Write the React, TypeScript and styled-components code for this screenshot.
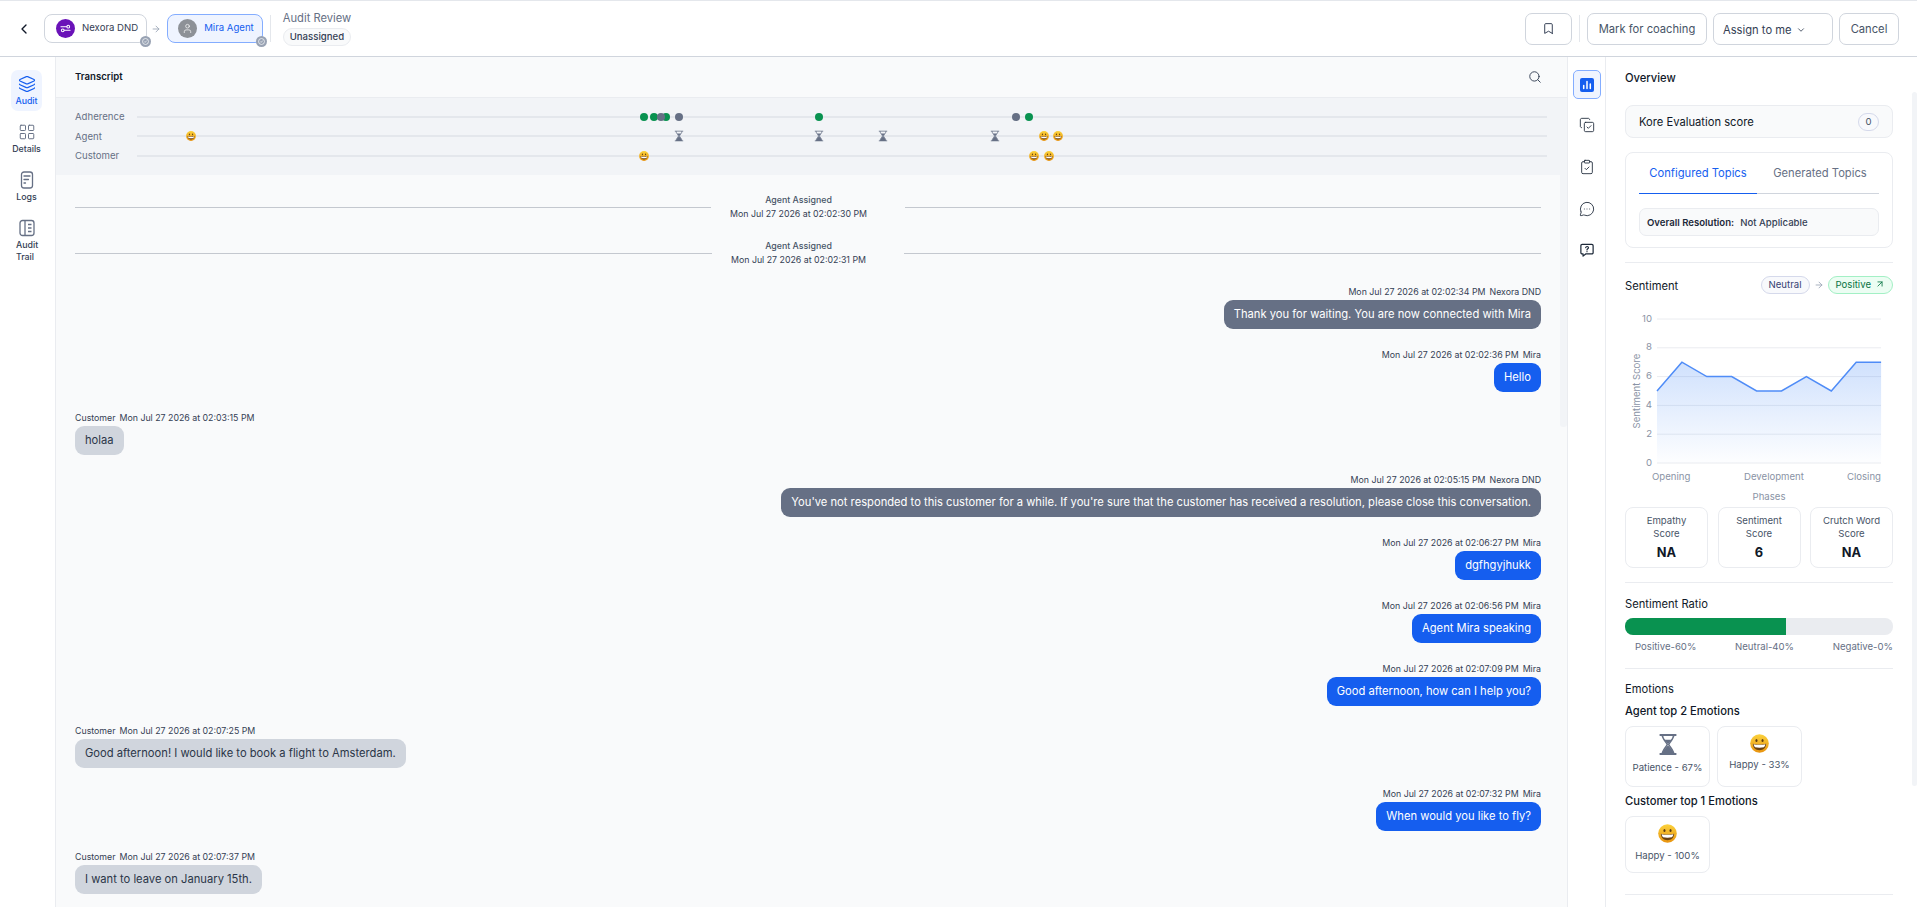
import React from "react";
import styled, { createGlobalStyle } from "styled-components";
import { ChevronLeft, ChevronDown, ArrowRight, ArrowUpRight, Bookmark, Search, Layers, LayoutGrid, CopyCheck, ClipboardCheck, MessageCircleMore, User } from "lucide-react";

const Global = createGlobalStyle`
  html, body { margin: 0; padding: 0; height: 100%; overflow: hidden; background: #fff; }
  #root { height: 100%; }
  * { box-sizing: border-box; }
  svg { flex: none; }
  body { font-family: Inter, "Noto Sans", sans-serif; color: #101828; }
`;

const Page = styled.div`
  height: 907px; display: flex; flex-direction: column; overflow: hidden; position: relative;
`;

/* Top bar */
const TopBar = styled.header`
  flex: none; height: 57px; display: flex; align-items: center; justify-content: space-between;
  padding: 0 18px 0 16px; border-top: 1px solid #e4e7ec; border-bottom: 1px solid #d0d5dd; background: #fff;
`;
const Group = styled.div`display: flex; align-items: center;`;
const BackButton = styled.div`width: 16px; height: 16px; margin-right: 12px; color: #101828; display: flex;`;
const Chip = styled.div<{ $active?: boolean }>`
  position: relative; height: 29px; display: flex; align-items: center; gap: 7px;
  padding: ${p => (p.$active ? "0 8px 0 10px" : "0 8px 0 11px")};
  border-radius: 8px; font-size: 9.6px; line-height: 14px; white-space: nowrap; margin-top: -1px;
  border: 1px solid ${p => (p.$active ? "#84adff" : "#d0d5dd")};
  background: ${p => (p.$active ? "#eff4ff" : "#fff")};
  color: ${p => (p.$active ? "#155eef" : "#344054")};
`;
const Avatar = styled.span<{ $bg: string }>`
  width: 19px; height: 19px; border-radius: 50%; background: ${p => p.$bg}; color: #fff;
  display: flex; align-items: center; justify-content: center; flex: none;
`;
const ChipBadge = styled.span`
  position: absolute; right: -5px; bottom: -5px; width: 11px; height: 11px; border-radius: 50%;
  background: #98a2b3; display: flex; align-items: center; justify-content: center;
`;
const ChipArrow = styled.span`margin: 0 6px 0 4px; color: #98a2b3; display: flex;`;
const VLine = styled.span`width: 1px; height: 27px; background: #e4e7ec; display: block;`;
const ChipSep = styled(VLine)`margin-left: 7px;`;
const ReviewBox = styled.div`margin-left: 12px; display: flex; flex-direction: column; align-items: flex-start; gap: 3px; margin-top: -1px;`;
const ReviewTitle = styled.div`font-size: 11.2px; line-height: 14px; color: #667085;`;
const Pill = styled.div`
  height: 18px; padding: 0 6px; border-radius: 9px; border: 1px solid #eaecf0; background: #f9fafb;
  font-size: 9.6px; line-height: 16px; color: #344054; font-weight: 500;
`;
const Btn = styled.div<{ $w: number }>`
  width: ${p => p.$w}px; height: 32px; border: 1px solid #d0d5dd; border-radius: 7px; background: #fff;
  display: flex; align-items: center; justify-content: center; font-size: 11.2px; color: #475467; white-space: nowrap;
`;
const SelectBtn = styled(Btn)`justify-content: flex-start; padding: 2px 0 0 9px; gap: 4px; color: #344054;`;
const BtnGap = styled.div`display: flex; gap: 6px; margin-left: 6px;`;
const BtnSep = styled(VLine)`margin-left: 7px; margin-right: 1px;`;

/* Body */
const Body = styled.div`flex: 1; min-height: 0; display: flex;`;

const Rail = styled.nav`
  flex: none; width: 56px; padding: 13px 0 0 11px; border-right: 1px solid #eaecf0; background: #fff;
  display: flex; flex-direction: column; gap: 7px;
`;
const RailItem = styled.div<{ $active?: boolean }>`
  width: 31px; height: 41px; padding-top: 5px; border-radius: 7px; display: flex; flex-direction: column; align-items: center; gap: 2px;
  background: ${p => (p.$active ? "#eff4ff" : "transparent")};
  color: ${p => (p.$active ? "#155eef" : "#667085")};
`;
const RailLabel = styled.span<{ $active?: boolean; $wrap?: boolean }>`
  font-size: 8.8px; line-height: 12px; font-weight: 500;
  color: ${p => (p.$active ? "#155eef" : "#344054")};
  ${p => p.$wrap && "width: 20px; text-align: left; margin-left: -1px; flex: none;"}
`;

const Main = styled.main`
  position: relative; flex: 1; min-width: 0; display: flex; flex-direction: column; background: #f9fafb;
`;
const MainHeader = styled.div`
  flex: none; height: 41px; padding: 0 25px 1px 19px; display: flex; align-items: center; justify-content: space-between;
  border-bottom: 1px solid #eaecf0; color: #344054;
`;
const MainTitle = styled.h2`margin: 0; font-size: 9.6px; font-weight: 600; color: #101828;`;
const Timeline = styled.div`
  flex: none; height: 77px; background: #f2f4f7; padding: 9px 20px 0 19px; display: flex; flex-direction: column;
`;
const TimelineRow = styled.div`display: flex; align-items: center; height: 19.5px;`;
const TimelineLabel = styled.span`width: 62px; flex: none; font-size: 9.6px; color: #667085;`;
const Track = styled.div`position: relative; flex: 1; height: 2px; background: #e4e7ec;`;
const Marker = styled.span<{ $at: number }>`
  position: absolute; left: ${p => p.$at}px; top: 1px; transform: translate(-50%, -50%); display: flex;
`;
const Dot = styled.span<{ $green?: boolean }>`
  width: 8px; height: 8px; border-radius: 50%; display: block; background: ${p => (p.$green ? "#099250" : "#667085")};
`;

const Feed = styled.div`
  flex: 1; min-height: 0; overflow: hidden; padding: 18px 26px 0 19px; display: flex; flex-direction: column;
`;
const EventRow = styled.div`display: flex; align-items: center; margin-bottom: 18px;`;
const EventLine = styled.span`flex: 1; height: 1px; background: #c4c8cf;`;
const EventText = styled.div`
  flex: none; padding: 0 38px 0 19px; text-align: center; font-size: 8.8px; line-height: 14px; color: #344054;
`;
const EventTitle = styled.div`font-weight: 500; color: #475467;`;
const Message = styled.div<{ $right?: boolean }>`
  display: flex; flex-direction: column; margin-bottom: 18.75px; align-items: ${p => (p.$right ? "flex-end" : "flex-start")};
`;
const Meta = styled.div`font-size: 8.8px; line-height: 14px; color: #344054; display: flex; gap: 4px; margin-bottom: 1px;`;
const Bubble = styled.div<{ $tone: "system" | "agent" | "customer" }>`
  height: 29px; padding: 0 10px; border-radius: 9px; font-size: 11.2px; line-height: 29px; white-space: nowrap;
  background: ${p => (p.$tone === "system" ? "#667085" : p.$tone === "agent" ? "#155eef" : "#d0d5dd")};
  color: ${p => (p.$tone === "customer" ? "#2b3648" : "#fff")};
`;
const MainThumb = styled.div`
  position: absolute; right: 0; top: 118px; width: 7px; height: 252px; background: #f2f4f7; border-radius: 0 0 3px 3px;
`;

const IconRail = styled.aside`
  flex: none; width: 39px; border-left: 1px solid #eaecf0; border-right: 1px solid #eaecf0; background: #fff;
  padding-top: 13px; display: flex; flex-direction: column; align-items: center; gap: 26px; color: #1d2939;
`;
const ActiveTool = styled.div`
  width: 28px; height: 29px; margin-bottom: -8px; border: 1px solid #84adff; border-radius: 5px; background: #eff4ff;
  display: flex; align-items: center; justify-content: center;
`;

const Panel = styled.section`
  position: relative; flex: none; width: 311px; background: #fff; padding: 13px 24px 0 19px; overflow: hidden;
`;
const PanelThumb = styled.div`
  position: absolute; right: 0; top: 35px; width: 5px; height: 694px; border-radius: 3px; background: #f2f4f7;
`;
const SectionTitle = styled.div<{ $top?: number }>`
  font-size: 11.2px; line-height: 16px; font-weight: 400; color: #101828; margin-top: ${p => p.$top ?? 0}px;
`;
const OverviewTitle = styled(SectionTitle)`font-weight: 500;`;
const SubTitle = styled(SectionTitle)`font-weight: 500;`;
const ScoreCard = styled.div`
  margin-top: 19px; height: 33px; border: 1px solid #eaecf0; border-radius: 8px; background: #f9fafb;
  padding: 0 13px; display: flex; align-items: center; justify-content: space-between; font-size: 11.2px; font-weight: 400; color: #101828;
`;
const Count = styled.span`
  width: 21px; height: 18px; border-radius: 9px; border: 1px solid #d5d9eb; background: #f8f9fc;
  font-size: 9.6px; line-height: 15px; text-align: center; color: #475467;
`;
const TopicsCard = styled.div`
  margin-top: 14px; height: 96px; border: 1px solid #eaecf0; border-radius: 8px; padding: 0 13px; background: #fff;
`;
const Tabs = styled.div`display: flex; height: 41px; border-bottom: 1px solid #d0d5dd;`;
const Tab = styled.div<{ $active?: boolean; $w: number }>`
  flex: none; width: ${p => p.$w}px; height: 41px; font-size: 11.2px; line-height: 40px; text-align: center; font-weight: 400;
  color: ${p => (p.$active ? "#155eef" : "#667085")};
  border-bottom: ${p => (p.$active ? "1px solid #155eef" : "none")};
`;
const Resolution = styled.div`
  margin-top: 14px; height: 28px; border: 1px solid #eaecf0; border-radius: 7px; background: #f9fafb; padding: 0 7px;
  display: flex; align-items: center; gap: 6px; font-size: 9.6px; font-weight: 500; color: #344054; margin-bottom: -2px;
`;
const ResolutionKey = styled.span`font-weight: 600; color: #1d2939;`;
const Divider = styled.hr<{ $top?: number }>`
  margin: ${p => p.$top ?? 14}px 0 0; border: 0; height: 1px; background: #eaecf0;
`;
const SentimentHead = styled.div`
  margin-top: 13px; height: 18px; display: flex; align-items: center; justify-content: space-between;
`;
const SentimentLabel = styled.span`font-size: 11.2px; font-weight: 400; color: #101828; padding-top: 1px;`;
const Shift = styled.div`display: flex; align-items: center; gap: 4px; color: #98a2b3;`;
const MoodTag = styled.span<{ $good?: boolean }>`
  height: 18px; padding: 0 7px; border-radius: 9px; font-size: 9.6px; line-height: 15px; display: flex; gap: 4px; align-items: flex-start;
  border: 1px solid ${p => (p.$good ? "#a3f0c5" : "#d5d9eb")};
  background: ${p => (p.$good ? "#ecfdf3" : "#f8f9fc")};
  color: ${p => (p.$good ? "#087443" : "#363f72")};
`;
const Chart = styled.svg`display: block; margin-top: 11px; width: 268px; height: 200px; font-family: Inter, sans-serif;`;
const Scores = styled.div`margin-top: 2px; display: grid; grid-template-columns: 83px 83px 83px; justify-content: space-between;`;
const Score = styled.div`
  height: 61px; border: 1px solid #eaecf0; border-radius: 8px; padding-top: 6px; text-align: center;
  font-size: 9.6px; line-height: 13px; color: #475467;
`;
const ScoreValue = styled.div`margin-top: 6px; font-size: 12.8px; line-height: 14px; font-weight: 700; color: #101828;`;
const RatioBar = styled.div`margin-top: 6px; height: 17px; border-radius: 8px; background: #eaecf0; overflow: hidden;`;
const RatioFill = styled.div`height: 100%; background: #099250;`;
const RatioLabels = styled.div`
  margin-top: 5px; padding-left: 10px; display: flex; justify-content: space-between; font-size: 9.6px; line-height: 14px; color: #667085;
`;
const EmotionRow = styled.div`margin-top: 7px; display: flex; gap: 7px;`;
const EmotionCard = styled.div<{ $gap: number; $h: number }>`
  width: 85px; height: ${p => p.$h}px; border: 1px solid #eaecf0; border-radius: 8px; padding-top: 7px;
  display: flex; flex-direction: column; align-items: center; gap: ${p => p.$gap}px; font-size: 9.6px; line-height: 14px; color: #475467;
`;

/* Drawings */
const Happy = ({ size }: { size: number }) => {
  const id = `happy-${size}`;
  return (
    <svg width={size} height={size} viewBox="0 0 20 20">
      <defs>
        <linearGradient id={id} x1="0" y1="0" x2="0" y2="1">
          <stop offset="0" stopColor="#fbd23c" />
          <stop offset="1" stopColor="#e8930f" />
        </linearGradient>
      </defs>
      <circle cx="10" cy="10" r="9.8" fill={`url(#${id})`} />
      <ellipse cx="6.800" cy="6.800" rx="1.100" ry="1.600" fill="#5b3a12" />
      <ellipse cx="13.200" cy="6.800" rx="1.100" ry="1.600" fill="#5b3a12" />
      <path d="M3 10.200c2.200 1 11.800 1 14 0 0 4-3 6.800-7 6.800s-7-2.800-7-6.800z" fill="#6b4211" />
      <path d="M3.800 10.900c2.600.7 9.800.7 12.400 0-.3 1.400-.9 2.500-1.600 3.100-2.400.7-6.800.7-9.200 0-.7-.6-1.300-1.700-1.600-3.100z" fill="#fff" />
    </svg>
  );
};
const Hourglass = ({ w, h }: { w: number; h: number }) => (
  <svg width={w} height={h} viewBox="0 0 16 20">
    <path d="M0 1h16M0 19h16" stroke="#667085" strokeWidth="2" fill="none" />
    <path d="M2.500 1c.2 3.500 3.300 6.200 4.800 9-1.500 2.800-4.600 5.500-4.800 9M13.500 1c-.2 3.500-3.300 6.200-4.800 9 1.500 2.800 4.600 5.500 4.800 9" stroke="#667085" strokeWidth="1.500" fill="none" />
    <path d="M2.500 19c.3-2.800 2.800-5.600 5.500-8.400 2.700 2.800 5.200 5.600 5.500 8.400z" fill="#667085" />
    <path d="M4.500 5.500h7L8 9.800z" fill="#667085" />
  </svg>
);
const BarsIcon = () => (
  <svg width="14" height="14" viewBox="0 0 14 14">
    <rect width="14" height="14" rx="2" fill="#155eef" />
    <path d="M3.700 7.500v3M7 3.500v7M10.300 6v4.500" stroke="#fff" strokeWidth="1.500" strokeLinecap="round" />
  </svg>
);
const LogsIcon = () => (
  <svg width="18" height="18" viewBox="0 0 18 18" fill="none" stroke="#667085" strokeWidth="1.300">
    <rect x="3.500" y="1" width="11" height="16" rx="2.500" />
    <path d="M6 5h6M6 8.500h4.500M6 12h1.500" strokeLinecap="round" />
  </svg>
);
const TrailIcon = () => (
  <svg width="18" height="18" viewBox="0 0 18 18" fill="none" stroke="#667085" strokeWidth="1.300">
    <rect x="2" y="1.500" width="14" height="15" rx="2.500" />
    <path d="M7 1.500v15M10 5.500h3.500M10 9h3.500M10 12.500h3.500" />
  </svg>
);
const AskIcon = () => (
  <svg width="14" height="14" viewBox="0 0 16 16" fill="none" stroke="#1d2939" strokeWidth="1.400" strokeLinecap="round" strokeLinejoin="round">
    <path d="M2.500 1.500h11a1.500 1.500 0 0 1 1.500 1.500v8a1.500 1.500 0 0 1-1.500 1.500H6.500L3.500 15v-2.500h-1A1.500 1.500 0 0 1 1 11V3a1.500 1.500 0 0 1 1.500-1.500z" />
    <path d="M6.500 5.200c.2-.8.900-1.200 1.600-1.200.9 0 1.600.6 1.600 1.400 0 1.200-1.700 1.300-1.700 2.500M8 9.800v.1" />
  </svg>
);
const RouteIcon = () => (
  <svg width="11" height="11" viewBox="0 0 12 12" fill="none" stroke="#fff" strokeWidth="1.100" strokeLinecap="round">
    <path d="M1 4h6.500M4.500 8H11" />
    <circle cx="9" cy="4" r="1.500" />
    <circle cx="3" cy="8" r="1.500" />
  </svg>
);
const BadgeIcon = () => (
  <svg width="7" height="7" viewBox="0 0 8 8" fill="none" stroke="#fff" strokeWidth="0.800">
    <circle cx="4" cy="4" r="3.400" />
    <path d="M2.600 4l1 1 1.800-2" />
  </svg>
);

const W = 268;
const plotX = (i: number) => 32 + i * 24.9;
const plotY = (v: number) => 14 + (10 - v) * 14.4;
const values = [5, 7, 6, 6, 5, 5, 6, 5, 7, 7];
const line = values.map((v, i) => `${i ? "L" : "M"}${plotX(i)} ${plotY(v)}`).join(" ");
const axis = "#8a93a5";

const SentimentChart = () => (
  <Chart viewBox={`0 0 ${W} 200`}>
    <defs>
      <linearGradient id="area" x1="0" y1="0" x2="0" y2="1">
        <stop offset="0" stopColor="#3b82f6" stopOpacity="0.24" />
        <stop offset="1" stopColor="#3b82f6" stopOpacity="0.01" />
      </linearGradient>
    </defs>
    {[0, 2, 4, 6, 8, 10].map(v => (
      <g key={v}>
        <line x1="32" x2="256" y1={plotY(v)} y2={plotY(v)} stroke="#eaecf0" />
        <text x="27" y={plotY(v) + 2.500} textAnchor="end" fontSize="9.600" fill={axis}>{v}</text>
      </g>
    ))}
    <path d={`${line} L${plotX(9)} ${plotY(0)} L32 ${plotY(0)} Z`} fill="url(#area)" />
    <path d={line} fill="none" stroke="#4f8cf7" strokeWidth="1.500" />
    <text transform="translate(14.500 86) rotate(-90)" textAnchor="middle" fontSize="9.600" fill={axis}>Sentiment Score</text>
    <text x="27" y="174.500" fontSize="9.600" fill={axis}>Opening</text>
    <text x="119" y="174.500" fontSize="9.600" fill={axis}>Development</text>
    <text x="256" y="174.500" textAnchor="end" fontSize="9.600" fill={axis}>Closing</text>
    <text x="144" y="194.500" textAnchor="middle" fontSize="9.600" fill={axis}>Phases</text>
  </Chart>
);

const messages: { right?: boolean; who: string; when: string; text: string; tone: "system" | "agent" | "customer" }[] = [
  { right: true, who: "Nexora DND", when: "Mon Jul 27 2026 at 02:02:34 PM", text: "Thank you for waiting. You are now connected with Mira", tone: "system" },
  { right: true, who: "Mira", when: "Mon Jul 27 2026 at 02:02:36 PM", text: "Hello", tone: "agent" },
  { who: "Customer", when: "Mon Jul 27 2026 at 02:03:15 PM", text: "holaa", tone: "customer" },
  { right: true, who: "Nexora DND", when: "Mon Jul 27 2026 at 02:05:15 PM", text: "You've not responded to this customer for a while. If you're sure that the customer has received a resolution, please close this conversation.", tone: "system" },
  { right: true, who: "Mira", when: "Mon Jul 27 2026 at 02:06:27 PM", text: "dgfhgyjhukk", tone: "agent" },
  { right: true, who: "Mira", when: "Mon Jul 27 2026 at 02:06:56 PM", text: "Agent Mira speaking", tone: "agent" },
  { right: true, who: "Mira", when: "Mon Jul 27 2026 at 02:07:09 PM", text: "Good afternoon, how can I help you?", tone: "agent" },
  { who: "Customer", when: "Mon Jul 27 2026 at 02:07:25 PM", text: "Good afternoon! I would like to book a flight to Amsterdam.", tone: "customer" },
  { right: true, who: "Mira", when: "Mon Jul 27 2026 at 02:07:32 PM", text: "When would you like to fly?", tone: "agent" },
  { who: "Customer", when: "Mon Jul 27 2026 at 02:07:37 PM", text: "I want to leave on January 15th.", tone: "customer" },
];

const T0 = 137;
const adherence: [number, boolean][] = [[644, true], [654, true], [666, true], [661, false], [679, false], [819, true], [1016, false], [1029, true]];
const agentGlass = [679, 819, 883, 995];
const agentHappy = [190.5, 1044, 1058];
const customerHappy = [644, 1034, 1049];

export default function App() {
  return (
    <Page>
      <Global />
      <TopBar>
        <Group>
          <BackButton><ChevronLeft size={16} strokeWidth={2} /></BackButton>
          <Chip>
            <Avatar $bg="#6a12b8"><RouteIcon /></Avatar>
            Nexora DND
            <ChipBadge><BadgeIcon /></ChipBadge>
          </Chip>
          <ChipArrow><ArrowRight size={10} /></ChipArrow>
          <Chip $active>
            <Avatar $bg="#8d9197"><User size={11} strokeWidth={1.5} /></Avatar>
            Mira Agent
            <ChipBadge><BadgeIcon /></ChipBadge>
          </Chip>
          <ChipSep />
          <ReviewBox>
            <ReviewTitle>Audit Review</ReviewTitle>
            <Pill>Unassigned</Pill>
          </ReviewBox>
        </Group>
        <Group>
          <Btn $w={47}><Bookmark size={13} color="#344054" strokeWidth={1.8} /></Btn>
          <BtnSep />
          <BtnGap>
            <Btn $w={120}>Mark for coaching</Btn>
            <SelectBtn $w={120}>Assign to me <ChevronDown size={10} /></SelectBtn>
            <Btn $w={60}>Cancel</Btn>
          </BtnGap>
        </Group>
      </TopBar>
      <Body>
        <Rail>
          <RailItem $active><Layers size={18} strokeWidth={1.5} /><RailLabel $active>Audit</RailLabel></RailItem>
          <RailItem><LayoutGrid size={18} strokeWidth={1.3} /><RailLabel>Details</RailLabel></RailItem>
          <RailItem><LogsIcon /><RailLabel>Logs</RailLabel></RailItem>
          <RailItem><TrailIcon /><RailLabel $wrap>Audit Trail</RailLabel></RailItem>
        </Rail>
        <Main>
          <MainHeader>
            <MainTitle>Transcript</MainTitle>
            <Search size={14} strokeWidth={1.6} />
          </MainHeader>
          <Timeline>
            <TimelineRow>
              <TimelineLabel>Adherence</TimelineLabel>
              <Track>
                {adherence.map(([x, g], i) => <Marker key={i} $at={x - T0}><Dot $green={g} /></Marker>)}
              </Track>
            </TimelineRow>
            <TimelineRow>
              <TimelineLabel>Agent</TimelineLabel>
              <Track>
                {agentGlass.map(x => <Marker key={x} $at={x - T0}><Hourglass w={9} h={11} /></Marker>)}
                {agentHappy.map(x => <Marker key={x} $at={x - T0}><Happy size={10} /></Marker>)}
              </Track>
            </TimelineRow>
            <TimelineRow>
              <TimelineLabel>Customer</TimelineLabel>
              <Track>
                {customerHappy.map(x => <Marker key={x} $at={x - T0}><Happy size={10} /></Marker>)}
              </Track>
            </TimelineRow>
          </Timeline>
          <Feed>
            <EventRow>
              <EventLine />
              <EventText><EventTitle>Agent Assigned</EventTitle>Mon Jul 27 2026 at 02:02:30 PM</EventText>
              <EventLine />
            </EventRow>
            <EventRow>
              <EventLine />
              <EventText><EventTitle>Agent Assigned</EventTitle>Mon Jul 27 2026 at 02:02:31 PM</EventText>
              <EventLine />
            </EventRow>
            {messages.map((m, i) => (
              <Message key={i} $right={m.right}>
                <Meta>
                  {m.right ? <><span>{m.when}</span><span>{m.who}</span></> : <><span>{m.who}</span><span>{m.when}</span></>}
                </Meta>
                <Bubble $tone={m.tone}>{m.text}</Bubble>
              </Message>
            ))}
          </Feed>
          <MainThumb />
        </Main>
        <IconRail>
          <ActiveTool><BarsIcon /></ActiveTool>
          <CopyCheck size={16} strokeWidth={1.3} />
          <ClipboardCheck size={16} strokeWidth={1.3} />
          <MessageCircleMore size={16} strokeWidth={1.3} />
          <AskIcon />
        </IconRail>
        <Panel>
          <OverviewTitle>Overview</OverviewTitle>
          <ScoreCard>Kore Evaluation score<Count>0</Count></ScoreCard>
          <TopicsCard>
            <Tabs>
              <Tab $active $w={118}>Configured Topics</Tab>
              <Tab $w={126}>Generated Topics</Tab>
            </Tabs>
            <Resolution><ResolutionKey>Overall Resolution:</ResolutionKey>Not Applicable</Resolution>
          </TopicsCard>
          <Divider />
          <SentimentHead>
            <SentimentLabel>Sentiment</SentimentLabel>
            <Shift>
              <MoodTag>Neutral</MoodTag>
              <ArrowRight size={10} />
              <MoodTag $good>Positive <ArrowUpRight size={10} style={{ marginTop: 2 }} /></MoodTag>
            </Shift>
          </SentimentHead>
          <SentimentChart />
          <Scores>
            <Score>Empathy<br />Score<ScoreValue>NA</ScoreValue></Score>
            <Score>Sentiment<br />Score<ScoreValue>6</ScoreValue></Score>
            <Score>Crutch Word<br />Score<ScoreValue>NA</ScoreValue></Score>
          </Scores>
          <Divider />
          <SectionTitle $top={13}>Sentiment Ratio</SectionTitle>
          <RatioBar><RatioFill style={{ width: "60%" }} /></RatioBar>
          <RatioLabels><span>Positive-60%</span><span>Neutral-40%</span><span>Negative-0%</span></RatioLabels>
          <Divider />
          <SectionTitle $top={12}>Emotions</SectionTitle>
          <SubTitle $top={6}>Agent top 2 Emotions</SubTitle>
          <EmotionRow>
            <EmotionCard $gap={6} $h={61}><Hourglass w={18} h={21} /><span>Patience - 67%</span></EmotionCard>
            <EmotionCard $gap={5} $h={61}><Happy size={19} /><span>Happy - 33%</span></EmotionCard>
          </EmotionRow>
          <SubTitle $top={6}>Customer top 1 Emotions</SubTitle>
          <EmotionRow>
            <EmotionCard $gap={6} $h={57}><Happy size={19} /><span>Happy - 100%</span></EmotionCard>
          </EmotionRow>
          <Divider $top={21} />
          <PanelThumb />
        </Panel>
      </Body>
    </Page>
  );
}
